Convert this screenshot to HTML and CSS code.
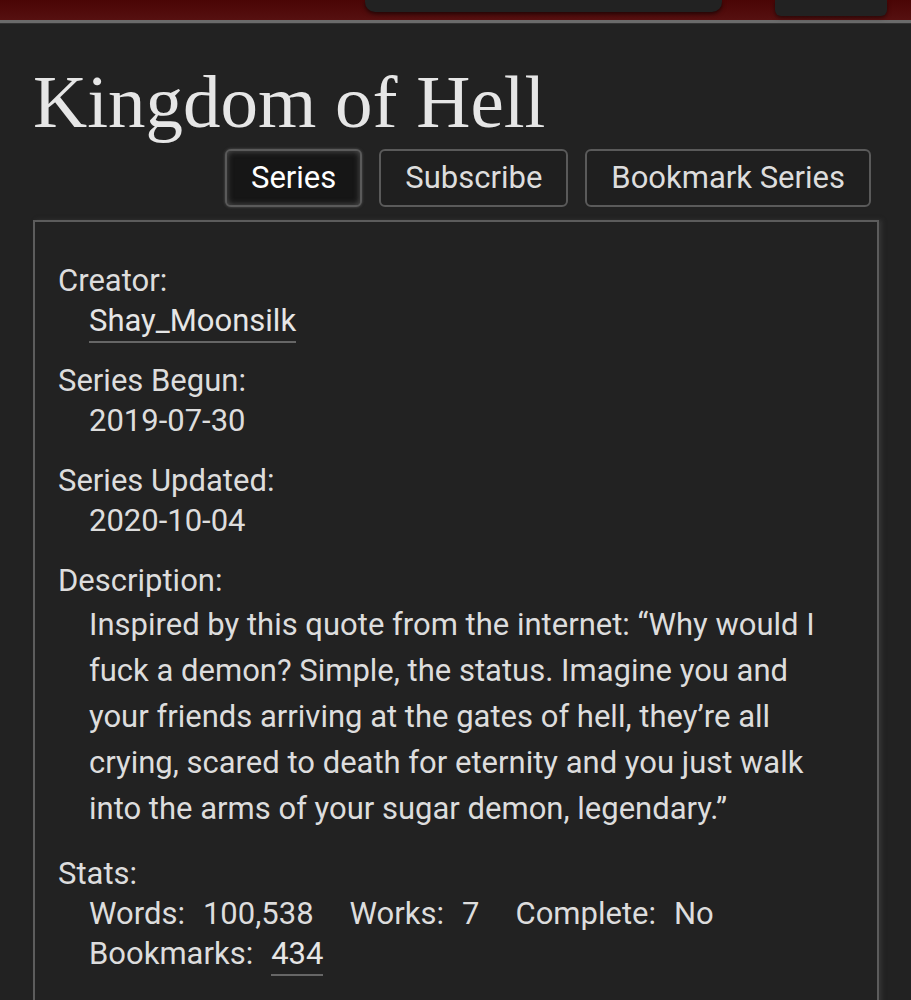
FILE: index.html
```html
<!DOCTYPE html>
<html lang="en">
<head>
    <meta charset="UTF-8">
    <meta name="viewport" content="width=device-width, initial-scale=1.0">
    <title>Kingdom of Hell</title>
    <link rel="stylesheet" href="styles.css">
</head>
<body>
    <!-- header strip (search + menu, cut off) -->
    <div class="header">
        <div class="search-box"></div>
        <div class="menu-box"></div>
    </div>

    <div class="main">
        <h2 class="heading">Kingdom of Hell</h2>

        <ul class="navigation">
            <li><a class="current" href="#">Series</a></li>
            <li><a href="#">Subscribe</a></li>
            <li><a href="#">Bookmark Series</a></li>
        </ul>

        <div class="series-meta">
            <dl class="meta">
                <dt>Creator:</dt>
                <dd><a class="link" href="#">Shay_Moonsilk</a></dd>

                <dt>Series Begun:</dt>
                <dd>2019-07-30</dd>

                <dt>Series Updated:</dt>
                <dd>2020-10-04</dd>

                <dt>Description:</dt>
                <dd class="summary">Inspired by this quote from the internet: “Why would I fuck a demon? Simple, the status. Imagine you and your friends arriving at the gates of hell, they’re all crying, scared to death for eternity and you just walk into the arms of your sugar demon, legendary.”</dd>

                <dt>Stats:</dt>
                <dd>
                    <dl class="stats">
                        <dt>Words:</dt><dd>100,538</dd>
                        <dt>Works:</dt><dd>7</dd>
                        <dt>Complete:</dt><dd>No</dd>
                        <dt>Bookmarks:</dt><dd><a class="link" href="#">434</a></dd>
                    </dl>
                </dd>
            </dl>
        </div>
    </div>
</body>
</html>
```

FILE: styles.css
```css
body {
    margin: 0;
    background-color: #222;
    color: #ddd;
    font-family: Roboto, "Liberation Sans", sans-serif;
    overflow: hidden;
}
.header {
    height: 20px;
    display: flex;
    align-items: flex-start;
    padding-right: 24px;
    justify-content: flex-end;
    background: linear-gradient(#4a0505, #561010);
    border-bottom: 3px solid #6b6b6b;
    box-shadow: 0 1px 0 #333;
}
.search-box {
    width: 357px;
    height: 12px;
    margin-right: 53px;
    background: #222;
    border-radius: 0 0 10px 10px;
    box-shadow: 0 2px 4px rgba(0, 0, 0, 0.6);
}
.menu-box {
    width: 112px;
    height: 16px;
    background: #222;
    border-radius: 0 0 6px 6px;
    box-shadow: 0 2px 4px rgba(0, 0, 0, 0.5);
}
.main {
    padding: 0 32px 0 33px;
}
.heading {
    font-family: "Liberation Serif", serif;
    font-weight: normal;
    font-size: 75px;
    line-height: 1;
    color: #e6e6e6;
    margin: 41px 0 0;
}
.navigation {
    list-style: none;
    margin: 10px 0 0;
    padding: 0 8px 0 0;
    display: flex;
    justify-content: flex-end;
    gap: 17px;
}
.navigation a {
    display: block;
    height: 54px;
    line-height: 54px;
    padding: 0 24px;
    font-size: 31px;
    color: #ddd;
    text-decoration: none;
    background: #1f1f1f;
    border: 2px solid #5a5a5a;
    border-radius: 6px;
}
.navigation a.current {
    color: #fff;
    background: #161616;
    box-shadow: inset 0 0 6px #555, 0 0 3px #555;
}
.series-meta {
    margin-top: 13px;
    border: 2px solid #5c5c5c;
    box-shadow: 3px 0 4px #333;
    padding: 39px 24px 20px 23px;
    min-height: 900px;
}
.meta {
    margin: 0;
    font-size: 31px;
}
.meta > dt {
    line-height: 40px;
}
.meta > dd {
    margin: 0 0 20px 31px;
    line-height: 40px;
}
.meta > dd.summary {
    line-height: 46px;
    margin-top: 1px;
    margin-bottom: 22px;
}
.link {
    color: #e6e6e6;
    text-decoration: none;
    border-bottom: 2px solid #666;
    padding-bottom: 2px;
}
.stats {
    margin: 0;
    display: flex;
    flex-wrap: wrap;
    width: 720px;
}
.stats dt {
    margin-right: 18px;
}
.stats dd {
    margin: 0 36px 0 0;
}
```
